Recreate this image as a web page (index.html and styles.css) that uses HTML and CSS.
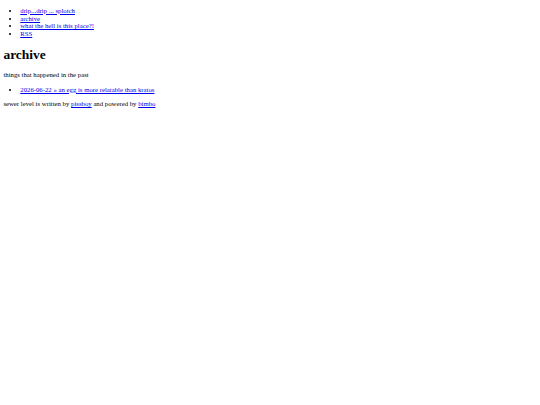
FILE: index.html
```html
<!DOCTYPE html>
<html lang="en">
  <head>
    <meta charset="UTF-8" />
    <title>archive - sewer level</title>
    <link rel="stylesheet" href="styles.css">
  </head>
  <body>
    <ul class="nav">
      <li><a href="/">drip...drip ... splotch</a></li>
      <li><a href="/archive">archive</a></li>
      <li><a href="/about">what the hell is this place?!</a></li>
      <li><a href="/rss.xml">RSS</a></li>
    </ul>

    <h1>archive</h1>
    <p>things that happened in the past</p>

    <ul class="posts">
      <li><a href="/posts/an-egg">2026-06-22 » an egg is more relatable than kratos</a></li>
    </ul>

    <p class="footer">
      sewer level is written by <a href="/about">pissboy</a> and powered by
      <a href="/bimbo">bimbo</a>
    </p>
  </body>
</html>
```

FILE: styles.css
```css
body {
  font-family: "Liberation Serif", "Times New Roman", serif;
  font-size: 6.75px;
  line-height: 1.15;
  margin: 0 3.375px 3.375px;
  color: #000;
}

ul {
  margin: 1em 0;
  padding-left: 2.5em;
}

h1 {
  font-size: 2em;
  margin: 0.67em 0;
}

p {
  margin: 1em 0;
}

a {
  color: #0000ee;
}
```
